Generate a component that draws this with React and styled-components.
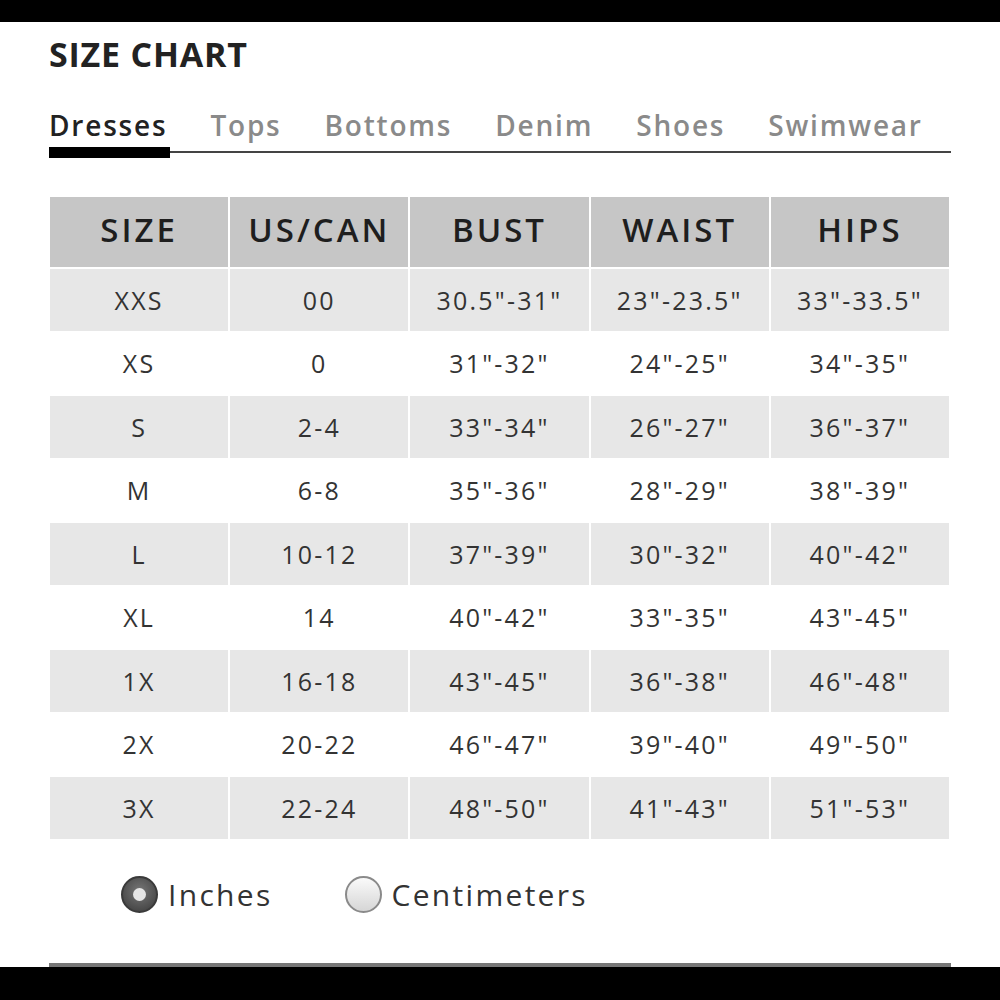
import React from 'react';
import styled, { createGlobalStyle } from 'styled-components';

const GlobalStyle = createGlobalStyle`
  html, body {
    margin: 0;
    padding: 0;
    background: #fff;
  }
  body {
    font-family: "Open Sans", "Liberation Sans", sans-serif;
  }
`;

const Page = styled.div`
  width: 1000px;
  height: 1000px;
  display: flex;
  flex-direction: column;
  background: #fff;
  overflow: hidden;
`;

const Bar = styled.div`
  height: ${p => p.h}px;
  background: #000;
  flex-shrink: 0;
`;

const Body = styled.div`
  flex: 1;
  padding: 0 49px 0 49px;
  display: flex;
  flex-direction: column;
`;

const Title = styled.h1`
  margin: 12px 0 0 0;
  font-size: 34px;
  line-height: 40px;
  font-weight: 700;
  color: #222;
  letter-spacing: 0.8px;
`;

const Tabs = styled.div`
  margin-top: 34px;
  display: flex;
  gap: 43px;
  border-bottom: 2px solid #444;
  height: 43px;
`;

const Tab = styled.div`
  font-size: 28px;
  line-height: 34px;
  font-weight: 600;
  letter-spacing: 1.8px;
  color: ${p => (p.active ? '#222' : '#8a8a8a')};
  position: relative;
  &::after {
    content: '';
    display: ${p => (p.active ? 'block' : 'none')};
    position: absolute;
    left: 0;
    right: -3px;
    bottom: -7px;
    height: 11px;
    background: #000;
  }
`;

const Table = styled.div`
  margin-top: 44px;
  margin-left: 1px;
  width: 899px;
  display: grid;
  grid-template-columns: repeat(5, 1fr);
  column-gap: 2px;
  row-gap: 1.5px;
`;

const Head = styled.div`
  height: 70px;
  background: #c6c6c6;
  display: flex;
  align-items: center;
  justify-content: center;
  padding-bottom: 6px;
  box-sizing: border-box;
  font-size: 33px;
  font-weight: 600;
  letter-spacing: 3px;
  color: #1e1e1e;
`;

const Cell = styled.div`
  height: 62px;
  background: ${p => (p.shade ? '#e7e7e7' : '#fff')};
  display: flex;
  align-items: center;
  justify-content: center;
  font-size: 25px;
  letter-spacing: 2.2px;
  color: #333;
`;

const Units = styled.div`
  margin-top: 35px;
  padding-left: 72px;
  display: flex;
  align-items: center;
  gap: 72px;
`;

const Option = styled.label`
  display: flex;
  align-items: center;
  gap: 10px;
  font-size: 30px;
  color: #333;
  letter-spacing: 2.3px;
`;

const Radio = styled.span`
  width: 37px;
  height: 37px;
  border-radius: 50%;
  box-sizing: border-box;
  display: flex;
  align-items: center;
  justify-content: center;
  background: ${p =>
    p.checked
      ? 'radial-gradient(circle at 50% 40%, #777 0%, #555 55%, #3a3a3a 100%)'
      : 'linear-gradient(#fafafa, #d6d6d6)'};
  border: 2px solid ${p => (p.checked ? '#3a3a3a' : '#8a8a8a')};
  &::after {
    content: '';
    display: ${p => (p.checked ? 'block' : 'none')};
    width: 13px;
    height: 13px;
    border-radius: 50%;
    background: #e6e6e6;
  }
`;

const Rule = styled.div`
  margin-top: auto;
  height: 4px;
  background: #777;
`;

const headers = ['SIZE', 'US/CAN', 'BUST', 'WAIST', 'HIPS'];

const rows = [
  ['XXS', '00', '30.5"-31"', '23"-23.5"', '33"-33.5"'],
  ['XS', '0', '31"-32"', '24"-25"', '34"-35"'],
  ['S', '2-4', '33"-34"', '26"-27"', '36"-37"'],
  ['M', '6-8', '35"-36"', '28"-29"', '38"-39"'],
  ['L', '10-12', '37"-39"', '30"-32"', '40"-42"'],
  ['XL', '14', '40"-42"', '33"-35"', '43"-45"'],
  ['1X', '16-18', '43"-45"', '36"-38"', '46"-48"'],
  ['2X', '20-22', '46"-47"', '39"-40"', '49"-50"'],
  ['3X', '22-24', '48"-50"', '41"-43"', '51"-53"'],
];

const tabs = ['Dresses', 'Tops', 'Bottoms', 'Denim', 'Shoes', 'Swimwear'];

export default function App() {
  return (
    <Page>
      <GlobalStyle />
      <Bar h={22} />
      <Body>
        <Title>SIZE CHART</Title>
        <Tabs>
          {tabs.map((t, i) => (
            <Tab key={t} active={i === 0}>{t}</Tab>
          ))}
        </Tabs>
        <Table>
          {headers.map(h => <Head key={h}>{h}</Head>)}
          {rows.map((r, i) =>
            r.map((c, j) => (
              <Cell key={i + '-' + j} shade={i % 2 === 0}>{c}</Cell>
            ))
          )}
        </Table>
        <Units>
          <Option><Radio checked />Inches</Option>
          <Option><Radio />Centimeters</Option>
        </Units>
        <Rule />
      </Body>
      <Bar h={33} />
    </Page>
  );
}
